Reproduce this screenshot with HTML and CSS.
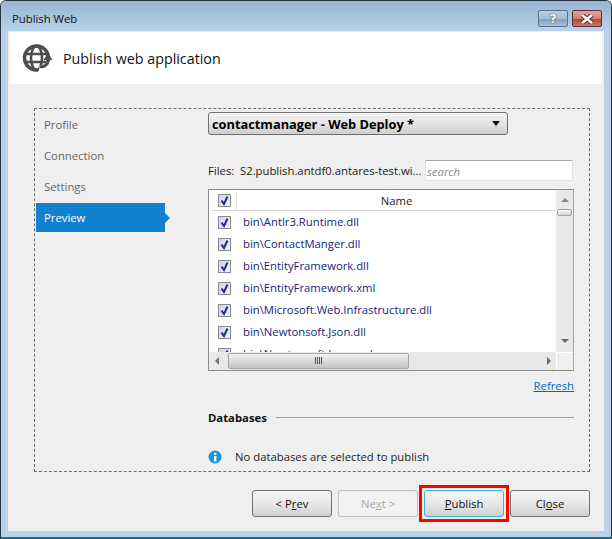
FILE: index.html
```html
<!DOCTYPE html>
<html lang="en">
<head>
    <meta charset="UTF-8">
    <title>Publish Web</title>
    <link rel="stylesheet" href="styles.css">
</head>
<body>
    <div class="window">
        <div class="titlebar">
            <span class="title">Publish Web</span>
            <div class="caption-buttons">
                <div class="caption-btn help">?</div>
                <div class="caption-btn close">
                    <svg width="14" height="10" viewBox="0 0 14 10"><path d="M2 1 L12 9 M12 1 L2 9" stroke="#5a2a28" stroke-width="4.4"/><path d="M2 1 L12 9 M12 1 L2 9" stroke="#fff" stroke-width="2.6"/></svg>
                </div>
            </div>
        </div>

        <div class="client">
            <div class="header">
                <svg class="globe" width="32" height="32" viewBox="0 0 32 32" fill="none" stroke="#4d4d4d">
                    <circle cx="14.500" cy="16" r="12" stroke-width="3.400"/>
                    <ellipse cx="14.500" cy="16" rx="5.500" ry="12" stroke-width="2.600"/>
                    <path d="M3 12 H26 M3 20 H26" stroke-width="2.600"/>
                    <path d="M17 27 A9 9 0 0 0 28 19" stroke="#fff" stroke-width="7"/>
                    <path d="M18 24.500 A6.500 6.500 0 0 0 26 17" stroke-width="3"/>
                    <path d="M21.500 18 L26 11 L30.500 18 Z" fill="#4d4d4d" stroke="none"/>
                </svg>
                <span class="header-text">Publish web application</span>
            </div>

            <div class="panel">
                <div class="wizard">
                    <div class="nav">
                        <div class="nav-item">Profile</div>
                        <div class="nav-item">Connection</div>
                        <div class="nav-item">Settings</div>
                        <div class="nav-item active">Preview</div>
                    </div>

                    <div class="main">
                        <div class="dropdown">
                            <span>contactmanager - Web Deploy *</span>
                            <span class="dropdown-arrow"></span>
                        </div>

                        <div class="files-row">
                            <span class="files-label">Files:</span>
                            <span class="files-path">S2.publish.antdf0.antares-test.wi...</span>
                            <div class="search">search</div>
                        </div>

                        <div class="grid">
                            <div class="grid-left">
                                <div class="grid-head">
                                    <div class="check-cell"><span class="check"><svg width="13" height="13" viewBox="0 0 13 13"><path d="M3.500 6.500 L6 10 L9.500 2.500" fill="none" stroke="#1f2f8f" stroke-width="2"/></svg></span></div>
                                    <div class="name-head">Name</div>
                                </div>
                                <div class="rows">
                                    <div class="row"><span class="check"><svg width="13" height="13" viewBox="0 0 13 13"><path d="M3.500 6.500 L6 10 L9.500 2.500" fill="none" stroke="#1f2f8f" stroke-width="2"/></svg></span><span class="file">bin\Antlr3.Runtime.dll</span></div>
                                    <div class="row"><span class="check"><svg width="13" height="13" viewBox="0 0 13 13"><path d="M3.500 6.500 L6 10 L9.500 2.500" fill="none" stroke="#1f2f8f" stroke-width="2"/></svg></span><span class="file">bin\ContactManger.dll</span></div>
                                    <div class="row"><span class="check"><svg width="13" height="13" viewBox="0 0 13 13"><path d="M3.500 6.500 L6 10 L9.500 2.500" fill="none" stroke="#1f2f8f" stroke-width="2"/></svg></span><span class="file">bin\EntityFramework.dll</span></div>
                                    <div class="row"><span class="check"><svg width="13" height="13" viewBox="0 0 13 13"><path d="M3.500 6.500 L6 10 L9.500 2.500" fill="none" stroke="#1f2f8f" stroke-width="2"/></svg></span><span class="file">bin\EntityFramework.xml</span></div>
                                    <div class="row"><span class="check"><svg width="13" height="13" viewBox="0 0 13 13"><path d="M3.500 6.500 L6 10 L9.500 2.500" fill="none" stroke="#1f2f8f" stroke-width="2"/></svg></span><span class="file">bin\Microsoft.Web.Infrastructure.dll</span></div>
                                    <div class="row"><span class="check"><svg width="13" height="13" viewBox="0 0 13 13"><path d="M3.500 6.500 L6 10 L9.500 2.500" fill="none" stroke="#1f2f8f" stroke-width="2"/></svg></span><span class="file">bin\Newtonsoft.Json.dll</span></div>
                                    <div class="row"><span class="check"><svg width="13" height="13" viewBox="0 0 13 13"><path d="M3.500 6.500 L6 10 L9.500 2.500" fill="none" stroke="#1f2f8f" stroke-width="2"/></svg></span><span class="file">bin\Newtonsoft.Json.xml</span></div>
                                </div>
                                <div class="hscroll">
                                    <span class="arrow arrow-left"></span>
                                    <div class="hthumb"><span class="grip"></span></div>
                                    <span class="arrow arrow-right"></span>
                                </div>
                            </div>
                            <div class="vscroll">
                                <span class="arrow arrow-up"></span>
                                <div class="vthumb"></div>
                                <span class="arrow arrow-down"></span>
                                <div class="corner"></div>
                            </div>
                        </div>

                        <div class="refresh-row"><a class="refresh">Refresh</a></div>

                        <div class="section">
                            <span class="section-title">Databases</span>
                            <span class="section-line"></span>
                        </div>

                        <div class="info-row">
                            <svg width="14" height="14" viewBox="0 0 14 14"><circle cx="7" cy="7" r="6.500" fill="#1a96dc"/><rect x="6" y="6" width="2.400" height="5.500" fill="#fff"/><rect x="6" y="2.800" width="2.400" height="2" fill="#fff"/></svg>
                            <span>No databases are selected to publish</span>
                        </div>
                    </div>
                </div>

                <div class="buttons">
                    <div class="btn">&lt; P<u>r</u>ev</div>
                    <div class="btn disabled">Ne<u>x</u>t &gt;</div>
                    <div class="highlight"><div class="btn focused"><u>P</u>ublish</div></div>
                    <div class="btn">Cl<u>o</u>se</div>
                </div>
            </div>
        </div>
    </div>
</body>
</html>
```
FILE: styles.css
```css
html, body {
    margin: 0;
    padding: 0;
}
body {
    width: 612px;
    height: 539px;
    overflow: hidden;
    background: #fff;
    font-family: "Open Sans", "Noto Sans", sans-serif;
    font-size: 11.3px;
    color: #1a1a1a;
}
.window {
    box-sizing: border-box;
    width: 612px;
    height: 539px;
    border: 1px solid #26343f;
    border-bottom: 2px solid #1f6f85;
    border-radius: 6px 6px 0 0;
    background: #b9d2ea;
    display: flex;
    flex-direction: column;
}

/* title bar */
.titlebar {
    height: 30px;
    flex: none;
    background: linear-gradient(#9ab4d2, #bad2ea);
    border-radius: 5px 5px 0 0;
    display: flex;
    justify-content: space-between;
    padding: 9px 9px 0 11px;
    box-sizing: border-box;
}
.title {
    line-height: 18px;
    color: #111;
}
.caption-buttons {
    display: flex;
    gap: 4px;
}
.caption-btn {
    box-sizing: border-box;
    width: 30px;
    height: 17px;
    border: 1px solid #5e7288;
    border-radius: 2px;
    display: flex;
    align-items: center;
    justify-content: center;
    color: #fff;
    font-family: "DejaVu Sans", sans-serif;
    font-weight: bold;
    font-size: 13px;
    line-height: 15px;
    text-shadow: 0 0 1px #333, 0 0 1px #333;
}
.help {
    background: linear-gradient(#b9cfe6 0, #a3bcd8 50%, #7f9cbd 52%, #a9c3dd 100%);
}
.close {
    border-color: #5d2a33;
    background: linear-gradient(#dfa9a0 0, #cf7f72 50%, #b03f33 52%, #cd7a68 100%);
}

.client {
    flex: 1;
    margin: 0 7px 6px 7px;
    background: #efefef;
    display: flex;
    flex-direction: column;
}
.header {
    height: 52px;
    flex: none;
    margin: 1px 2px 0 2px;
    background: #fff;
    display: flex;
    align-items: center;
    padding-left: 12px;
    gap: 9px;
}
.globe {
    flex: none;
}
.header-text {
    font-size: 14.3px;
    color: #111;
}

/* wizard box */
.panel {
    flex: 1;
    padding: 24px 14px 0 26px;
}
.wizard {
    box-sizing: border-box;
    height: 364px;
    width: 556px;
    border: 1px dashed #6e6e6e;
    display: flex;
    padding: 1px 15px 0 1px;
}
.nav {
    width: 172px;
    flex: none;
    display: flex;
    flex-direction: column;
    gap: 2px;
}
.nav-item {
    height: 29px;
    width: 129px;
    box-sizing: border-box;
    padding-left: 8px;
    line-height: 29px;
    color: #666;
    position: relative;
}
.nav-item.active {
    background: #1281d0;
    color: #fff;
}
.nav-item.active::after {
    content: "";
    position: absolute;
    left: 129px;
    top: 10px;
    border-left: 5px solid #1281d0;
    border-top: 5px solid transparent;
    border-bottom: 5px solid transparent;
}

.main {
    width: 366px;
    flex: none;
    padding-top: 2px;
}
.dropdown {
    box-sizing: border-box;
    width: 300px;
    height: 23px;
    border: 1px solid #6f6f6f;
    border-radius: 3px;
    background: linear-gradient(#f4f4f4, #e6e6e6 45%, #cfcfcf);
    display: flex;
    align-items: center;
    justify-content: space-between;
    padding: 0 7px 0 3px;
    font-weight: bold;
    font-size: 12.8px;
    color: #000;
}
.dropdown-arrow {
    border-top: 5px solid #111;
    border-left: 4px solid transparent;
    border-right: 4px solid transparent;
}

.files-row {
    margin-top: 25px;
    height: 21px;
    display: flex;
    align-items: center;
}
.files-label {
    width: 32px;
    flex: none;
}
.files-path {
    width: 185px;
    flex: none;
    white-space: nowrap;
    overflow: hidden;
}
.search {
    box-sizing: border-box;
    width: 148px;
    height: 21px;
    background: #fff;
    border: 1px solid #dfe3e8;
    border-top-color: #a8a8a8;
    font-style: italic;
    color: #8a8a8a;
    padding-left: 1px;
    line-height: 21px;
}

/* file list */
.grid {
    box-sizing: border-box;
    margin-top: 8px;
    height: 182px;
    width: 366px;
    border: 1px solid #8c8c8c;
    border-right-color: #a5a5a5;
    background: #fff;
    display: flex;
}
.grid-left {
    width: 347px;
    flex: none;
    display: flex;
    flex-direction: column;
}
.grid-head {
    height: 19px;
    flex: none;
    margin: 1px 0 0 3px;
    border-bottom: 1px solid #d5d5d5;
    display: flex;
    color: #1a1a1a;
}
.check-cell {
    width: 25px;
    flex: none;
    border-right: 1px solid #e4e4e4;
    padding-left: 6px;
    box-sizing: border-box;
    padding-top: 3px;
}
.name-head {
    flex: 1;
    text-align: center;
    line-height: 19px;
}
.rows {
    flex: 1;
    overflow: hidden;
}
.row {
    height: 22px;
    display: flex;
    align-items: center;
    padding-left: 9px;
    gap: 12px;
}
.check {
    box-sizing: border-box;
    width: 13px;
    height: 13px;
    border: 1px solid #8a8a8a;
    background: linear-gradient(135deg, #cfd4e6, #f2f3fa);
    display: block;
    flex: none;
}
.check svg {
    display: block;
    margin: -1px;
}
.file {
    color: #14267a;
    white-space: nowrap;
    padding-bottom: 1px;
}
.hscroll {
    height: 18px;
    flex: none;
    background: #e9e9e9;
    display: flex;
    align-items: center;
    padding: 0 5px 1px 3px;
    box-sizing: border-box;
    justify-content: space-between;
}
.hthumb {
    box-sizing: border-box;
    width: 181px;
    height: 16px;
    margin: 0 auto 0 9px;
    border: 1px solid #a5a5a5;
    border-radius: 2px;
    background: linear-gradient(#f3f3f3, #d9d9d9 50%, #c4c4c4);
    display: flex;
    align-items: center;
    justify-content: center;
    flex: none;
}
.grip {
    width: 7px;
    height: 7px;
    background: repeating-linear-gradient(90deg, #555 0 1px, transparent 1px 2px);
}
.arrow {
    flex: none;
    display: block;
}
.arrow-left {
    border-right: 4px solid #777;
    border-top: 4px solid transparent;
    border-bottom: 4px solid transparent;
    margin-left: 3px;
}
.arrow-right {
    border-left: 4px solid #666;
    border-top: 4px solid transparent;
    border-bottom: 4px solid transparent;
}
.vscroll {
    width: 17px;
    flex: none;
    background: #e9e9e9;
    display: flex;
    flex-direction: column;
    align-items: center;
    padding-top: 8px;
    box-sizing: border-box;
}
.arrow-up {
    border-bottom: 4px solid #888;
    border-left: 4px solid transparent;
    border-right: 4px solid transparent;
}
.arrow-down {
    border-top: 4px solid #666;
    border-left: 4px solid transparent;
    border-right: 4px solid transparent;
    margin-top: 123px;
}
.vthumb {
    box-sizing: border-box;
    width: 15px;
    height: 7px;
    margin-top: 7px;
    border: 1px solid #a5a5a5;
    border-radius: 2px;
    background: linear-gradient(#f8f8f8, #d4d4d4);
}
.corner {
    box-sizing: border-box;
    width: 17px;
    height: 18px;
    margin-top: auto;
    border-top: 1px solid #fff;
    border-left: 1px solid #fff;
    background: #efefef;
}

.refresh-row {
    text-align: right;
    margin-top: 6px;
    line-height: 17px;
}
.refresh {
    color: #0066cc;
    text-decoration: underline;
}
.section {
    margin-top: 16px;
    display: flex;
    align-items: center;
    gap: 9px;
}
.section-title {
    font-weight: bold;
    color: #111;
}
.section-line {
    flex: 1;
    height: 1px;
    background: #a0a0a0;
}
.info-row {
    margin-top: 24px;
    display: flex;
    align-items: center;
    gap: 13px;
    color: #222;
}
.info-row svg {
    flex: none;
}

/* bottom buttons */
.buttons {
    margin-top: 18px;
    display: flex;
    justify-content: flex-end;
    gap: 6px;
    align-items: center;
}
.btn {
    box-sizing: border-box;
    width: 80px;
    height: 27px;
    border: 1px solid #707070;
    border-radius: 3px;
    background: linear-gradient(#f5f5f5, #e8e8e8 50%, #cfcfcf);
    text-align: center;
    line-height: 26px;
    color: #111;
}
.btn.disabled {
    color: #a8a8a8;
    border-color: #c0c0c0;
    background: #f2f2f2;
}
.btn.focused {
    border-color: #3ab4dc;
}
.highlight {
    border: 3px solid #f00;
    padding: 2px;
    margin: -5px;
    z-index: 1;
}
```
